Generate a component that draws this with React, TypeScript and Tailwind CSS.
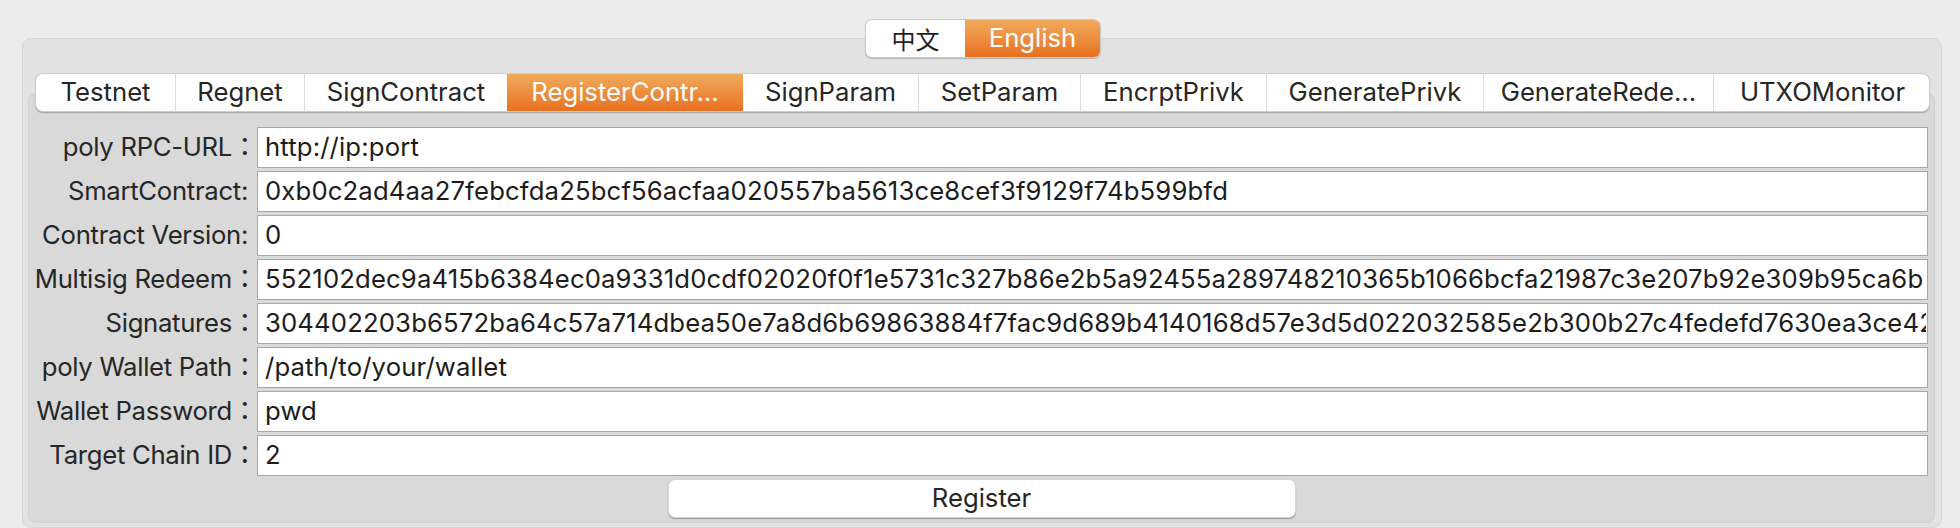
import React from 'react';

const tabs = [
  { label: 'Testnet', w: 'w-[139px]' },
  { label: 'Regnet', w: 'w-[129px]' },
  { label: 'SignContract', w: 'w-[203px]' },
  { label: 'RegisterContr…', w: 'w-[236px]', active: true },
  { label: 'SignParam', w: 'w-[175px]' },
  { label: 'SetParam', w: 'w-[162px]' },
  { label: 'EncrptPrivk', w: 'w-[186px]' },
  { label: 'GeneratePrivk', w: 'w-[217px]' },
  { label: 'GenerateRede…', w: 'w-[230px]' },
  { label: 'UTXOMonitor', w: 'w-[218px]' },
];

// wide: label ends with a full-width colon
const fields = [
  { label: 'poly RPC-URL', wide: true, value: 'http://ip:port' },
  { label: 'SmartContract', value: '0xb0c2ad4aa27febcfda25bcf56acfaa020557ba5613ce8cef3f9129f74b599bfd' },
  { label: 'Contract Version', value: '0' },
  {
    label: 'Multisig Redeem',
    wide: true,
    value:
      '552102dec9a415b6384ec0a9331d0cdf02020f0f1e5731c327b86e2b5a92455a289748210365b1066bcfa21987c3e207b92e309b95ca6b',
  },
  {
    label: 'Signatures',
    wide: true,
    value:
      '304402203b6572ba64c57a714dbea50e7a8d6b69863884f7fac9d689b4140168d57e3d5d022032585e2b300b27c4fedefd7630ea3ce42',
  },
  { label: 'poly Wallet Path', wide: true, value: '/path/to/your/wallet' },
  { label: 'Wallet Password', wide: true, value: 'pwd' },
  { label: 'Target Chain ID', wide: true, value: '2' },
];

const App: React.FC = () => {
  return (
    <div className="w-full h-[528px] overflow-hidden bg-[#ececec] font-[Inter,'Noto_Sans_CJK_JP',sans-serif] text-[25.7px] text-[#262626]">
      {/* Language switch */}
      <div className="relative z-10 flex justify-center pt-[19px] pl-[6px]">
        <div className="flex h-[39px] rounded-[7px] border border-[#c9c9c9] bg-white shadow-[0_1px_1px_rgba(0,0,0,0.2)] overflow-hidden">
          <div className="w-[99px] flex items-center justify-center font-['Noto_Sans_CJK_SC',sans-serif] text-[24px] text-[#1f1f1f]">
            中文
          </div>
          <div className="w-[135px] flex items-center justify-center bg-linear-to-b from-[#f0aa5a] to-[#e8701e] text-white">
            English
          </div>
        </div>
      </div>

      {/* Group box */}
      <div className="-mt-[20px] ml-[22px] mr-[18px] h-[490px] rounded-[9px] border border-[#d6d6d6] bg-[#e2e2e2] pt-[34px] pl-[5px] pr-[6px]">
        {/* Tab bar */}
        <div className="relative z-10 ml-[7px] mr-[5px] flex h-[39px] rounded-[8px] border border-[#cdcdcd] bg-white shadow-[0_1px_1px_rgba(0,0,0,0.25)] overflow-hidden">
          {tabs.map((t, i) => {
            const prevActive = i > 0 && tabs[i - 1].active;
            return (
              <div
                key={t.label}
                className={
                  t.active
                    ? `${t.w} shrink-0 flex items-center justify-center bg-linear-to-b from-[#f0aa5a] to-[#e8701e] text-white`
                    : i === 0 || prevActive
                    ? `${t.w} shrink-0 flex items-center justify-center`
                    : `${t.w} shrink-0 flex items-center justify-center border-l border-[#dcdcdc]`
                }
              >
                {t.label}
              </div>
            );
          })}
        </div>

        {/* Tab pane */}
        <div className="-mt-[19px] h-[430px] rounded-[8px] border border-[#d0d0d0] bg-[#d9d9d9] pt-[33px]">
          <div className="flex flex-col gap-[3px]">
            {fields.map((f) => (
              <div key={f.label} className="flex items-center h-[41px]">
                {f.wide ? (
                  <div className="w-[224px] shrink-0 flex justify-end whitespace-nowrap">
                    <span className="tracking-[-0.3px]">{f.label}</span>
                    <span className="inline-block w-[21px] text-center">：</span>
                  </div>
                ) : (
                  <div className="w-[224px] shrink-0 text-right whitespace-nowrap pr-[5px] tracking-[-0.3px]">{f.label}:</div>
                )}
                <div className="ml-[4px] mr-[6px] flex-1 min-w-0 h-[41px] flex items-center bg-white border border-[#a8a8a8] pl-[7px] pr-[1px]">
                  <div className="overflow-hidden whitespace-nowrap text-[#1c1c1c] tracking-[0.14px]">{f.value}</div>
                </div>
              </div>
            ))}
          </div>
          <div className="mt-[3px] flex justify-center">
            <div className="w-[628px] h-[39px] flex items-center justify-center rounded-[7px] border border-[#d4d4d4] bg-white shadow-[0_1px_1px_rgba(0,0,0,0.3)]">
              Register
            </div>
          </div>
        </div>
      </div>
    </div>
  );
};

export default App;
